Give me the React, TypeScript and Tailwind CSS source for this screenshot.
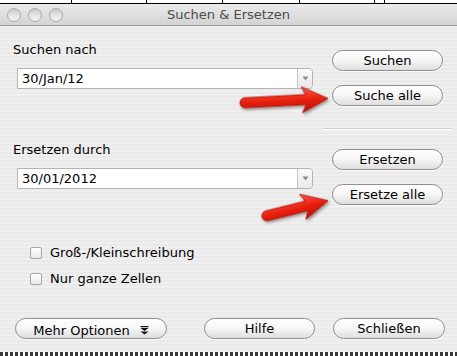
import React from 'react';

const font = { fontFamily: '"DejaVu Sans", "Liberation Sans", sans-serif' };

const AquaButton: React.FC<{ label: string; className?: string; children?: React.ReactNode }> = ({ label, className = '', children }) => (
  <div
    className={`h-[21px] rounded-full border border-[#8e8e8e] bg-gradient-to-b from-[#ffffff] via-[#f6f6f6] to-[#dedede] shadow-[0_1px_0_rgba(255,255,255,0.8)] flex items-center justify-center text-[13px] leading-none text-black ${className}`}
  >
    <span>{label}</span>
    {children}
  </div>
);

const Combo: React.FC<{ value: string }> = ({ value }) => (
  <div className="ml-[4px] w-[296px] h-[21px] flex border border-[#b4b4b4] bg-white rounded-r-[4px]">
    <div className="flex-1 pl-[4px] text-[13px] leading-[19px] text-black">{value}</div>
    <div className="w-[15px] border-l border-[#c4c4c4] bg-gradient-to-b from-[#fbfbfb] to-[#e8e8e8] rounded-r-[4px] flex items-center justify-center">
      <svg width="7" height="5" viewBox="0 0 7 5">
        <path d="M0.5 0.5 L6.5 0.5 L3.5 4.5 Z" fill="#8a8a8a" />
      </svg>
    </div>
  </div>
);

const Check: React.FC<{ label: string }> = ({ label }) => (
  <div className="flex items-center h-[16px]">
    <div className="ml-[17px] w-[12px] h-[12px] rounded-[2px] border border-[#a6a6a6] bg-gradient-to-b from-[#ffffff] to-[#e9e9e9]"></div>
    <span className="ml-[8px] text-[13px] leading-[16px] text-black">{label}</span>
  </div>
);

const Light = () => (
  <div className="w-[14px] h-[14px] rounded-full border border-[#a9a9a9] bg-gradient-to-b from-[#c9c9c9] via-[#e4e4e4] to-[#f2f2f2]"></div>
);

const Arrow: React.FC<{ x: number; y: number; len: number; angle: number }> = ({ x, y, len, angle }) => {
  const h = len - 22;
  const d = `M5,-5 L${h},-5 L${h - 4},-13 L${len},0 L${h - 4},13 L${h},5 L5,5 A5 5 0 0 1 5,-5 Z`;
  return (
    <g transform={`translate(${x} ${y}) rotate(${angle})`} filter="url(#shadow)">
      <path d={d} fill="url(#red)" stroke="#a50d06" strokeWidth="0.8" strokeLinejoin="round" />
    </g>
  );
};

export default function App() {
  return (
    <div className="relative w-[457px] h-[356px] overflow-hidden flex flex-col bg-[#ececec]" style={font}>
      {/* spreadsheet behind the dialog */}
      <div className="h-[4px] bg-white border-b border-black flex">
        <div className="w-[72px] border-r border-black"></div>
        <div className="w-[75px] border-r border-black"></div>
        <div className="w-[76px] border-r border-black"></div>
        <div className="w-[77px] border-r border-black"></div>
        <div className="w-[75px] border-r border-black"></div>
        <div className="w-[10px] border-r border-black"></div>
      </div>

      {/* title bar */}
      <div className="relative h-[22px] border-b border-[#9c9c9c] bg-gradient-to-b from-[#ebebeb] to-[#d3d3d3] flex items-center">
        <div className="flex gap-[7px] ml-[7px]">
          <Light />
          <Light />
          <Light />
        </div>
        <div className="absolute inset-0 flex items-center justify-center text-[13px] text-[#4c4c4c]">Suchen &amp; Ersetzen</div>
      </div>

      {/* body */}
      <div className="relative flex-1 flex flex-col bg-[repeating-linear-gradient(180deg,#efefef_0px,#efefef_2px,#eaeaea_2px,#eaeaea_4px)]">
        <div className="flex">
          <div className="ml-[13px] w-[299px]">
            <div className="pt-[16px] text-[13px] leading-[16px] text-black">Suchen nach</div>
            <div className="mt-[10px]">
              <Combo value="30/Jan/12" />
            </div>
            <div className="mt-[53px] text-[13px] leading-[16px] text-black">Ersetzen durch</div>
            <div className="mt-[10px]">
              <Combo value="30/01/2012" />
            </div>
            <div className="mt-[56px] flex flex-col gap-[10px]">
              <Check label="Groß-/Kleinschreibung" />
              <Check label="Nur ganze Zellen" />
            </div>
          </div>
          <div className="ml-[11px] w-[129px] flex flex-col">
            <AquaButton label="Suchen" className="mt-[24px] ml-[9px] w-[111px]" />
            <AquaButton label="Suche alle" className="mt-[14px] ml-[9px] w-[111px]" />
            <div className="mt-[22px] h-[2px] border-t border-[#cfcfcf] border-b border-b-white"></div>
            <AquaButton label="Ersetzen" className="mt-[19px] ml-[9px] w-[111px]" />
            <AquaButton label="Ersetze alle" className="mt-[14px] ml-[9px] w-[111px]" />
          </div>
        </div>

        <div className="mt-[31px] flex items-center">
          <AquaButton label="Mehr Optionen" className="ml-[15px] w-[152px] pt-[4px]">
            <svg width="9" height="9" viewBox="0 0 9 9" className="ml-[10px]">
              <rect x="0.5" y="0" width="8" height="1.2" fill="#111" />
              <path d="M0.5 2 L8.5 2 L4.5 5 Z" fill="#111" />
              <path d="M0.5 5.5 L8.5 5.5 L4.5 8.5 Z" fill="#111" />
            </svg>
          </AquaButton>
          <AquaButton label="Hilfe" className="ml-[37px] w-[111px]" />
          <AquaButton label="Schließen" className="ml-[18px] w-[112px]" />
        </div>
      </div>

      {/* spreadsheet below */}
      <div className="h-[4px] bg-white bg-[repeating-linear-gradient(90deg,#3a3a3a_0px,#3a3a3a_3px,#ffffff_3px,#ffffff_5px)]"></div>

      {/* annotation arrows */}
      <svg className="absolute inset-0 pointer-events-none" width="457" height="356">
        <defs>
          <linearGradient id="red" x1="0" y1="0" x2="0" y2="1">
            <stop offset="0" stopColor="#ff5a48" />
            <stop offset="0.5" stopColor="#e8200f" />
            <stop offset="1" stopColor="#b80f06" />
          </linearGradient>
          <filter id="shadow" x="-20%" y="-50%" width="140%" height="200%">
            <feDropShadow dx="1" dy="2" stdDeviation="1.5" floodColor="#000" floodOpacity="0.4" />
          </filter>
        </defs>
        <Arrow x={240} y={103} len={88} angle={-3} />
        <Arrow x={262} y={217} len={68} angle={-14} />
      </svg>
    </div>
  );
}
